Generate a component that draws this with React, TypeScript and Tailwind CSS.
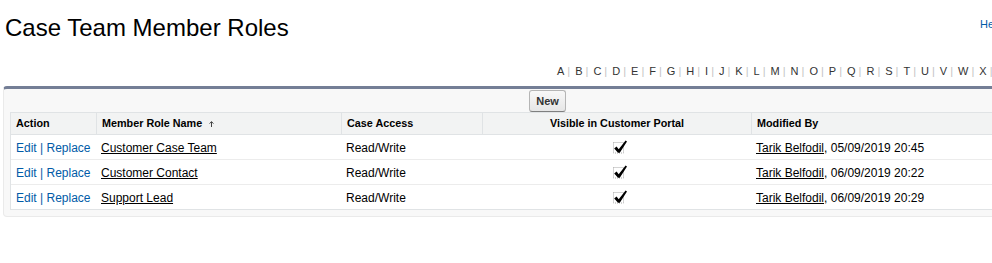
import React from "react";

const letters = [
  "A","B","C","D","E","F","G","H","I","J","K","L","M","N","O","P","Q","R","S","T","U","V","W","X","Y","Z","Other","All",
];

const rows = [
  { name: "Customer Case Team", date: "05/09/2019 20:45" },
  { name: "Customer Contact", date: "06/09/2019 20:22" },
  { name: "Support Lead", date: "06/09/2019 20:29" },
];

function Check() {
  return (
    <svg width="21" height="16" viewBox="0 0 21 16" className="block">
      <rect x="7.5" y="2.5" width="10" height="10.5" fill="none" stroke="#a8a8a8" strokeDasharray="1 1" />
      <path d="M8.2 8.4 L10.6 6.6 L12.7 9.2 L19.6 0.6 L21 1.4 L13.8 12.7 L12.0 12.7 Z" fill="#000" />
    </svg>
  );
}

function SortArrow() {
  return (
    <svg width="5" height="6" viewBox="0 0 5 6" className="inline-block ml-[7px]">
      <path d="M2.5 6 L2.5 0.8 M0.6 2.6 L2.5 0.6 L4.4 2.6" fill="none" stroke="#444" strokeWidth="1" />
    </svg>
  );
}

export default function App() {
  return (
    <div className="w-full overflow-hidden bg-white text-black [font-family:'Liberation_Sans',Arial,sans-serif]">
      <div className="ml-[3px] w-[1089px]">
        {/* title row */}
        <div className="flex items-start">
          <h1 className="flex-1 pl-[2px] pt-[14px] text-[24px] leading-[28px] font-normal">
            Case Team Member Roles
          </h1>
          <div className="w-[112px] pt-[18px] text-[11px] leading-[13px] text-[#015ba7] whitespace-nowrap">
            Help for this Page
          </div>
        </div>

        {/* rolodex */}
        <div className="mt-[23px] pl-[554px] flex whitespace-nowrap text-[11px] leading-[13px] text-[#333]">
          {letters.map((l, i) => (
            <span key={l} className="flex">
              <span>{l}</span>
              {i < letters.length - 1 && (
                <span className="ml-[3px] mr-[5px] text-[#c4c4c4]">|</span>
              )}
            </span>
          ))}
        </div>

        {/* page block */}
        <div className="mt-[8px] rounded-[4px] border border-[#eaeaea] border-t-[3px] border-t-[#747e96] bg-[#f8f8f8]">
          <div className="flex justify-center pt-[1px]">
            <button className="h-[22px] rounded-[3px] border border-[#b5b5b5] border-b-[#7f7f7f] bg-gradient-to-b from-[#f8f8f8] to-[#e6e6e6] px-[6px] text-[11px] font-bold leading-[13px] text-[#333]">
              New
            </button>
          </div>

          <div className="ml-[6px] mr-[12px] mb-[6px] border border-[#e0e3e5] bg-white">
            {/* header */}
            <div className="grid grid-cols-[85px_245px_141px_269px_1fr] bg-[#f2f3f3] border-b border-[#e0e3e5] text-[10.8px] font-bold leading-[13px]">
              <div className="pl-[5px] py-[4px]">Action</div>
              <div className="border-l border-[#e0e3e5] pl-[5px] py-[4px] whitespace-nowrap">
                Member Role Name
                <SortArrow />
              </div>
              <div className="border-l border-[#e0e3e5] pl-[5px] py-[4px]">Case Access</div>
              <div className="border-l border-[#e0e3e5] py-[4px] text-center">Visible in Customer Portal</div>
              <div className="border-l border-[#e0e3e5] pl-[5px] py-[4px]">Modified By</div>
            </div>

            {rows.map((r, i) => (
              <div
                key={r.name}
                className={
                  "grid grid-cols-[85px_245px_141px_269px_1fr] text-[12px] leading-[16px] " +
                  (i < rows.length - 1 ? "border-b border-[#ececec]" : "")
                }
              >
                <div className="pl-[5px] pt-[5px] pb-[3px] text-[#015ba7] whitespace-nowrap">
                  <span>Edit</span> | <span>Replace</span>
                </div>
                <div className="pl-[5px] pt-[5px] pb-[3px]">
                  <span className="underline">{r.name}</span>
                </div>
                <div className="pl-[5px] pt-[5px] pb-[3px]">Read/Write</div>
                <div className="flex justify-center pt-[5px]">
                  <Check />
                </div>
                <div className="pl-[5px] pt-[5px] pb-[3px] whitespace-nowrap">
                  <span className="underline">Tarik Belfodil</span>, {r.date}
                </div>
              </div>
            ))}
          </div>
        </div>
      </div>
    </div>
  );
}
